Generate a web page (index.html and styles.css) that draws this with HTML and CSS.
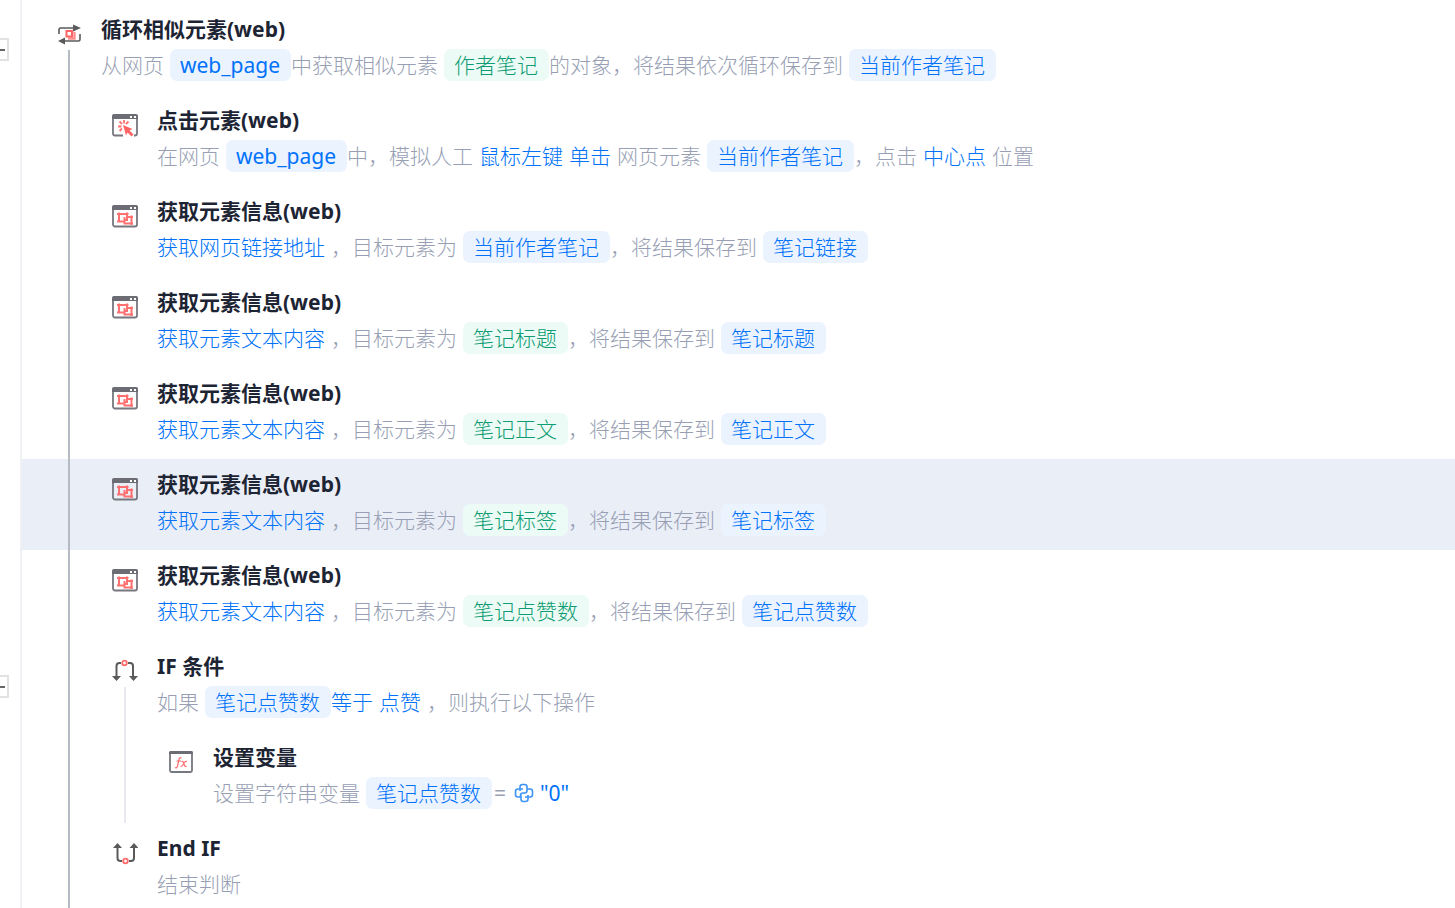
FILE: index.html
```html
<!DOCTYPE html>
<html lang="zh-CN">
<head>
    <meta charset="UTF-8">
    <meta name="viewport" content="width=device-width, initial-scale=1.0">
    <title>流程编辑</title>
    <link rel="stylesheet" href="styles.css">
</head>

<body>
    <!-- 公用图标 -->
    <svg class="sprite" aria-hidden="true">
        <symbol id="icon-loop" viewBox="0 0 26 26">
          <path d="M3 12V7.500Q3 6 4.500 6H18M24 12v5.500Q24 19 22.500 19H9" fill="none" stroke="#5a5a5a" stroke-width="1.600"/>
          <path d="M17 2.500L25 6l-8 3.500zM9 15.500L2 19l7 3.500z" fill="#5a5a5a"/>
          <path d="M12 16.500h6.500V10" fill="none" stroke="#ff8f8f" stroke-width="2.400"/>
          <path d="M10.500 9h5.500v5.500h-5.500z" fill="#fff" stroke="#ff6464" stroke-width="2"/>
        </symbol>
        <symbol id="icon-click" viewBox="0 0 26 26">
          <path d="M11 22.500H3q-2 0-2-2V5M25 5v15.500q0 2-2 2h-1" fill="none" stroke="#77777f" stroke-width="1.800"/>
          <path d="M0 6V3q0-2 2-2h22q2 0 2 2v3z" fill="#6c6c75"/>
          <path d="M18 3h2v2h-2zM22 3h2v2h-2z" fill="#fff"/>
          <path d="M12 7v3.500M7.500 8.500l2.500 2.500M16.500 8.500L14 11M6 13.500h3.500M7.500 18l2.500-2.500" fill="none" stroke="#ff7070" stroke-width="1.800"/>
          <path d="M11 12l9.500 4-3 1.500 4 4-2 2-4-4-1.500 3z" fill="#ff6464"/>
        </symbol>
        <symbol id="icon-info" viewBox="0 0 26 26">
          <rect x="1" y="2" width="24" height="20.500" rx="2" fill="none" stroke="#77777f" stroke-width="1.800"/>
          <path d="M0 6V3q0-2 2-2h22q2 0 2 2v3z" fill="#6c6c75"/>
          <path d="M18 3h2v2h-2zM22 3h2v2h-2z" fill="#fff"/>
          <path d="M7 8.500v10M5 10h11.500M15 8.500v8M5 17.500h6.500M12.500 19.500V13M15 13h6M19.500 11.500v9.500M11.500 19.500h9.500M11.500 16h4.500" fill="none" stroke="#ff7070" stroke-width="2"/>
        </symbol>
        <symbol id="icon-if" viewBox="0 0 26 26">
          <path d="M4.500 18V7q0-3 3-3H9M16 4h2q3 0 3 3v11" fill="none" stroke="#5a5a5a" stroke-width="2"/>
          <path d="M0 17h9l-4.500 5zM17 17h9l-4.500 5z" fill="#5a5a5a"/>
          <circle cx="12.500" cy="4" r="2.300" fill="#fff" stroke="#ff6b6b" stroke-width="1.800"/>
        </symbol>
        <symbol id="icon-endif" viewBox="0 0 26 26">
          <path d="M5.500 6v11q0 3 3 3H10M17 20h2q3 0 3-3V6" fill="none" stroke="#5a5a5a" stroke-width="2"/>
          <path d="M1 7h9L5.500 2zM17.500 7h9L22 2z" fill="#5a5a5a"/>
          <circle cx="13.500" cy="20" r="2.300" fill="#fff" stroke="#ff6b6b" stroke-width="1.800"/>
        </symbol>
        <symbol id="icon-var" viewBox="0 0 26 26">
          <rect x="2" y="2" width="22" height="20" rx="1.500" fill="none" stroke="#77777f" stroke-width="1.800"/>
          <path d="M1 4V2.500Q1 1 2.500 1h21Q25 1 25 2.500V4z" fill="#6c6c75"/>
          <path d="M13.500 8q-2-1-2.500 1.500L9.500 16q-.5 2.500-2.500 1.500M8.500 11h4.500M13.500 11.500q1.500-.5 2 1l1 3q.5 1.500 2 .5M19 11.500q-1.500-.5-2.500 1l-2 3q-.8 1-2 .5" fill="none" stroke="#ff6b6b" stroke-width="1.200"/>
        </symbol>
        <symbol id="icon-python" viewBox="0 0 20 20">
          <path d="M6 8V4q0-2.500 2.500-2.500h2Q13 1.500 13 4v3.500Q13 10 10.500 10H9q-2.500 0-2.500 2.500V14H4q-2.500 0-2.500-2.500V8.500Q1.500 6 4 6h5M14 12v4q0 2.500-2.500 2.500h-2Q7 18.500 7 16v-3.500M13 6h3q2.500 0 2.500 2.500v3Q18.500 14 16 14h-5" fill="none" stroke="#3d94f8" stroke-width="1.600"/>
        </symbol>
    </svg>

    <div class="editor">
      <!-- 左侧折叠按钮 -->
      <div class="gutter">
        <button class="fold" type="button" aria-label="折叠循环"></button>
        <button class="fold fold-if" type="button" aria-label="折叠条件"></button>
      </div>

      <main class="flow">
        <!-- 循环 -->
        <section class="block block-loop">
          <div class="step">
            <svg class="icon"><use href="#icon-loop"/></svg>
            <div class="info">
              <h3>循环相似元素(web)</h3>
              <p class="desc"><span>从网页</span><span class="chip latin">web_page</span><span>中获取相似元素</span><span class="chip green">作者笔记</span><span>的对象，将结果依次循环保存到</span><span class="chip">当前作者笔记</span></p>
            </div>
          </div>
          <div class="step level-2">
            <svg class="icon"><use href="#icon-click"/></svg>
            <div class="info">
              <h3>点击元素(web)</h3>
              <p class="desc"><span>在网页</span><span class="chip latin">web_page</span><span>中，模拟人工</span><a href="#">鼠标左键</a><a href="#">单击</a><span>网页元素</span><span class="chip">当前作者笔记</span><span>，点击</span><a href="#">中心点</a><span>位置</span></p>
            </div>
          </div>
          <div class="step level-2">
            <svg class="icon"><use href="#icon-info"/></svg>
            <div class="info">
              <h3>获取元素信息(web)</h3>
              <p class="desc"><a href="#">获取网页链接地址</a><span>，目标元素为</span><span class="chip">当前作者笔记</span><span>，将结果保存到</span><span class="chip">笔记链接</span></p>
            </div>
          </div>
          <div class="step level-2">
            <svg class="icon"><use href="#icon-info"/></svg>
            <div class="info">
              <h3>获取元素信息(web)</h3>
              <p class="desc"><a href="#">获取元素文本内容</a><span>，目标元素为</span><span class="chip green">笔记标题</span><span>，将结果保存到</span><span class="chip">笔记标题</span></p>
            </div>
          </div>
          <div class="step level-2">
            <svg class="icon"><use href="#icon-info"/></svg>
            <div class="info">
              <h3>获取元素信息(web)</h3>
              <p class="desc"><a href="#">获取元素文本内容</a><span>，目标元素为</span><span class="chip green">笔记正文</span><span>，将结果保存到</span><span class="chip">笔记正文</span></p>
            </div>
          </div>
          <!-- 当前选中 -->
          <div class="step level-2 active">
            <svg class="icon"><use href="#icon-info"/></svg>
            <div class="info">
              <h3>获取元素信息(web)</h3>
              <p class="desc"><a href="#">获取元素文本内容</a><span>，目标元素为</span><span class="chip green">笔记标签</span><span>，将结果保存到</span><span class="chip">笔记标签</span></p>
            </div>
          </div>
          <div class="step level-2">
            <svg class="icon"><use href="#icon-info"/></svg>
            <div class="info">
              <h3>获取元素信息(web)</h3>
              <p class="desc"><a href="#">获取元素文本内容</a><span>，目标元素为</span><span class="chip green">笔记点赞数</span><span>，将结果保存到</span><span class="chip">笔记点赞数</span></p>
            </div>
          </div>
          <!-- 条件 -->
          <section class="block block-if">
            <div class="step level-2">
              <svg class="icon"><use href="#icon-if"/></svg>
              <div class="info">
                <h3>IF 条件</h3>
                <p class="desc"><span>如果</span><span class="chip">笔记点赞数</span><a href="#">等于</a><a href="#">点赞</a><span>，则执行以下操作</span></p>
              </div>
            </div>
            <div class="step level-3">
              <svg class="icon"><use href="#icon-var"/></svg>
              <div class="info">
                <h3>设置变量</h3>
                <p class="desc"><span>设置字符串变量</span><span class="chip">笔记点赞数</span><span class="equals latin">=</span><svg class="python"><use href="#icon-python"/></svg><a class="latin" href="#">"0"</a></p>
              </div>
            </div>
          </section>
          <div class="step level-2">
            <svg class="icon"><use href="#icon-endif"/></svg>
            <div class="info">
              <h3>End IF</h3>
              <p class="desc"><span>结束判断</span></p>
            </div>
          </div>
        </section>
      </main>
    </div>
</body>
</html>
```

FILE: styles.css
```css
*{
 box-sizing: border-box;
}
body{
 margin: 0;
 background-color: #fff;
 font-family: "Noto Sans", "Noto Sans CJK SC", sans-serif;
 font-size: 21px;
 color: #1d2433;
}
.sprite{
 display: none;
}
.editor{
 display: flex;
 height: 100vh;
 overflow: hidden;
}
/* 左侧折叠栏 */
.gutter{
 flex: none;
 width: 22px;
 overflow: hidden;
 border-right: 2px solid #f0f0f5;
}
.fold{
 display: flex;
 align-items: center;
 justify-content: center;
 width: 23px;
 height: 23px;
 margin: 38px 0 0 -14px;
 padding: 0;
 border: 2px solid #e2e2e2;
 background-color: #fff;
 cursor: pointer;
}
.fold::before{
 content: "";
 width: 15px;
 height: 2px;
 background-color: #666;
}
.fold-if{
 margin-top: 614px;
}
/* 流程 */
.flow{
 flex: 1;
 min-width: 0;
 padding-top: 4px;
}
.block{
 position: relative;
}
.block::before{
 content: "";
 position: absolute;
 top: 46px;
 bottom: 0;
 left: 46px;
 width: 2px;
 background-color: #b4bbc2;
}
.block-if::before{
 left: 102px;
 background-color: #e9e9f1;
}
.step{
 display: flex;
 gap: 19px;
 padding: 10px 0 14px 34px;
}
.level-2{
 padding-left: 90px;
}
.level-3{
 padding-left: 146px;
}
.active{
 background-color: #eaeef7;
}
.icon{
 flex: none;
 width: 26px;
 height: 26px;
 margin-top: 8px;
}
h3{
 margin: 0 0 5px;
 font-size: 21px;
 font-weight: 700;
 line-height: 30px;
}
.desc{
 display: flex;
 align-items: center;
 margin: 0;
 line-height: 32px;
 font-weight: 300;
 color: #989fb4;
 white-space: nowrap;
}
.desc > * + *{
 margin-left: 6px;
}
.desc > .chip + *{
 margin-left: 0;
}
.desc a{
 color: #0072fa;
 text-decoration: none;
}
.desc .latin{
 font-weight: 400;
}
.chip{
 padding: 0 11px 0 10px;
 border-radius: 7px;
 background-color: #ebf3ff;
 color: #0072fa;
}
.green{
 background-color: #ecfbf5;
 color: #0d9c73;
}
.desc > .equals{
 padding: 0 2px;
}
.python{
 width: 20px;
 height: 20px;
}
```
